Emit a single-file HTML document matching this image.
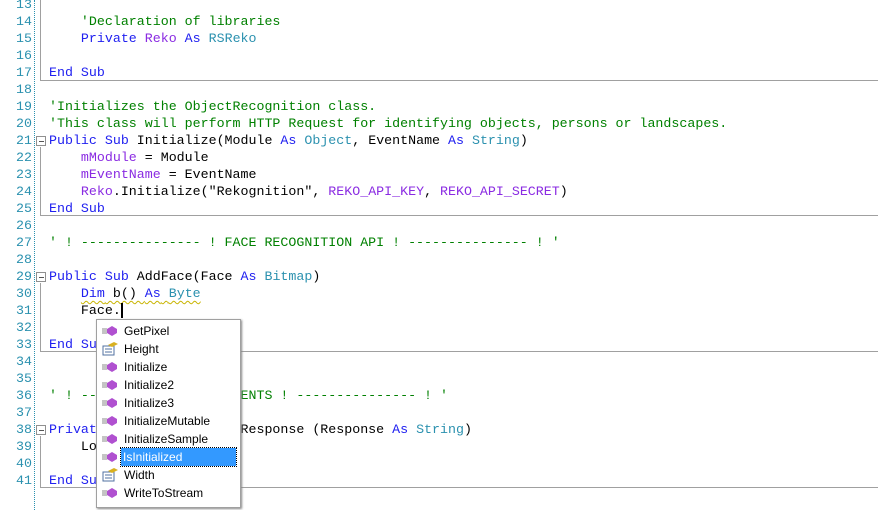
<!DOCTYPE html>
<html><head><style>
body{margin:0;width:878px;height:510px;background:#fff;overflow:hidden;position:relative;font-family:"Liberation Mono",monospace;font-size:13.3px}
.ln{position:absolute;left:0;width:32px;text-align:right;color:#2b91af;height:17px;line-height:17px}
.c{position:absolute;left:49px;height:17px;line-height:17px;white-space:pre;color:#000}
.k{color:#2020f0}.g{color:#008000}.t{color:#2b91af}.p{color:#8a2be2}
.sep{position:absolute;left:34px;top:0;height:510px;border-left:1px dotted #2b91af}
.h{position:absolute;left:40px;right:0;height:0;border-top:1px solid #a0a0a0}
.v{position:absolute;left:40px;width:0;border-left:1px solid #a0a0a0}
.fb{position:absolute;left:36px;width:8px;height:8px;border:1px solid #909090;background:#fff}
.fb:after{content:"";position:absolute;left:2px;top:4px;width:5px;height:1px;background:#555}
.pop{position:absolute;left:96px;top:319px;width:143px;height:187px;background:#fff;border:1px solid #a0a0a0;box-shadow:1px 1px 2px #888;font-family:"Liberation Sans",sans-serif;font-size:12px}
.it{position:absolute;left:0;height:18px;line-height:18px;width:143px}
.it span{position:absolute;left:26px;padding:0 1px}
.ic{position:absolute;left:5px;top:4px;width:16px;height:10px}
.sel span{background:#3399ff;color:#fff;width:112px;left:24px;outline:1px dotted #000;padding-left:2px}
.sq{text-decoration:underline wavy #c8b400;text-decoration-thickness:1px;text-underline-offset:3px}
</style></head><body>
<div class="sep"></div>
<div class="v" style="top:0;height:81px"></div>
<div class="h" style="top:80px"></div>
<div class="v" style="top:147px;height:69px"></div>
<div class="h" style="top:215px"></div>
<div class="v" style="top:283px;height:69px"></div>
<div class="h" style="top:351px"></div>
<div class="v" style="top:436px;height:52px"></div>
<div class="h" style="top:487px"></div>
<div class="fb" style="top:136px"></div>
<div class="fb" style="top:272px"></div>
<div class="fb" style="top:425px"></div>

<div class="ln" style="top:-4px">13</div>
<div class="ln" style="top:13px">14</div><div class="c g" style="top:13px">    'Declaration of libraries</div>
<div class="ln" style="top:30px">15</div><div class="c" style="top:30px">    <span class="k">Private</span> <span class="p">Reko</span> <span class="k">As</span> <span class="t">RSReko</span></div>
<div class="ln" style="top:47px">16</div>
<div class="ln" style="top:64px">17</div><div class="c k" style="top:64px">End Sub</div>
<div class="ln" style="top:81px">18</div>
<div class="ln" style="top:98px">19</div><div class="c g" style="top:98px">'Initializes the ObjectRecognition class.</div>
<div class="ln" style="top:115px">20</div><div class="c g" style="top:115px">'This class will perform HTTP Request for identifying objects, persons or landscapes.</div>
<div class="ln" style="top:132px">21</div><div class="c" style="top:132px"><span class="k">Public Sub</span> Initialize(Module <span class="k">As</span> <span class="t">Object</span>, EventName <span class="k">As</span> <span class="t">String</span>)</div>
<div class="ln" style="top:149px">22</div><div class="c" style="top:149px">    <span class="p">mModule</span> = Module</div>
<div class="ln" style="top:166px">23</div><div class="c" style="top:166px">    <span class="p">mEventName</span> = EventName</div>
<div class="ln" style="top:183px">24</div><div class="c" style="top:183px">    <span class="p">Reko</span>.Initialize("Rekognition", <span class="p">REKO_API_KEY</span>, <span class="p">REKO_API_SECRET</span>)</div>
<div class="ln" style="top:200px">25</div><div class="c k" style="top:200px">End Sub</div>
<div class="ln" style="top:217px">26</div>
<div class="ln" style="top:234px">27</div><div class="c g" style="top:234px">' ! --------------- ! FACE RECOGNITION API ! --------------- ! '</div>
<div class="ln" style="top:251px">28</div>
<div class="ln" style="top:268px">29</div><div class="c" style="top:268px"><span class="k">Public Sub</span> AddFace(Face <span class="k">As</span> <span class="t">Bitmap</span>)</div>
<div class="ln" style="top:285px">30</div><div class="c" style="top:285px">    <span class="sq"><span class="k">Dim</span> b() <span class="k">As</span> <span class="t">Byte</span></span></div>
<div class="ln" style="top:302px">31</div><div class="c" style="top:302px">    Face.<span style="border-left:2px solid #000"></span></div>
<div class="ln" style="top:319px">32</div>
<div class="ln" style="top:336px">33</div><div class="c k" style="top:336px">End Sub</div>
<div class="ln" style="top:353px">34</div>
<div class="ln" style="top:370px">35</div>
<div class="ln" style="top:387px">36</div><div class="c g" style="top:387px">' ! --------------- ! EVENTS ! --------------- ! '</div>
<div class="ln" style="top:404px">37</div>
<div class="ln" style="top:421px">38</div><div class="c" style="top:421px"><span class="k">Private Sub</span> Rekognition_Response (Response <span class="k">As</span> <span class="t">String</span>)</div>
<div class="ln" style="top:438px">39</div><div class="c" style="top:438px">    Log(Response)</div>
<div class="ln" style="top:455px">40</div>
<div class="ln" style="top:472px">41</div><div class="c k" style="top:472px">End Sub</div>

<div class="pop">
<div class="it" style="top:2px"><svg class="ic"><path d="M0 3h5M0 5h5M0 7h5" stroke="#888"/><path d="M10 0l5 3v4l-5 3-5-3V3z" fill="#b050d0"/></svg><span>GetPixel</span></div>
<div class="it" style="top:20px"><svg class="ic" style="top:2px;height:14px"><rect x="1" y="4" width="11" height="9" fill="#fff" stroke="#5070a0"/><path d="M3 7h7M3 10h7" stroke="#5070a0"/><path d="M6 3l6-3 4 2-6 3z" fill="#d8b020"/></svg><span>Height</span></div>
<div class="it" style="top:38px"><svg class="ic"><path d="M0 3h5M0 5h5M0 7h5" stroke="#888"/><path d="M10 0l5 3v4l-5 3-5-3V3z" fill="#b050d0"/></svg><span>Initialize</span></div>
<div class="it" style="top:56px"><svg class="ic"><path d="M0 3h5M0 5h5M0 7h5" stroke="#888"/><path d="M10 0l5 3v4l-5 3-5-3V3z" fill="#b050d0"/></svg><span>Initialize2</span></div>
<div class="it" style="top:74px"><svg class="ic"><path d="M0 3h5M0 5h5M0 7h5" stroke="#888"/><path d="M10 0l5 3v4l-5 3-5-3V3z" fill="#b050d0"/></svg><span>Initialize3</span></div>
<div class="it" style="top:92px"><svg class="ic"><path d="M0 3h5M0 5h5M0 7h5" stroke="#888"/><path d="M10 0l5 3v4l-5 3-5-3V3z" fill="#b050d0"/></svg><span>InitializeMutable</span></div>
<div class="it" style="top:110px"><svg class="ic"><path d="M0 3h5M0 5h5M0 7h5" stroke="#888"/><path d="M10 0l5 3v4l-5 3-5-3V3z" fill="#b050d0"/></svg><span>InitializeSample</span></div>
<div class="it sel" style="top:128px"><svg class="ic"><path d="M0 3h5M0 5h5M0 7h5" stroke="#888"/><path d="M10 0l5 3v4l-5 3-5-3V3z" fill="#b050d0"/></svg><span>IsInitialized</span></div>
<div class="it" style="top:146px"><svg class="ic" style="top:2px;height:14px"><rect x="1" y="4" width="11" height="9" fill="#fff" stroke="#5070a0"/><path d="M3 7h7M3 10h7" stroke="#5070a0"/><path d="M6 3l6-3 4 2-6 3z" fill="#d8b020"/></svg><span>Width</span></div>
<div class="it" style="top:164px"><svg class="ic"><path d="M0 3h5M0 5h5M0 7h5" stroke="#888"/><path d="M10 0l5 3v4l-5 3-5-3V3z" fill="#b050d0"/></svg><span>WriteToStream</span></div>
</div>
</body></html>
